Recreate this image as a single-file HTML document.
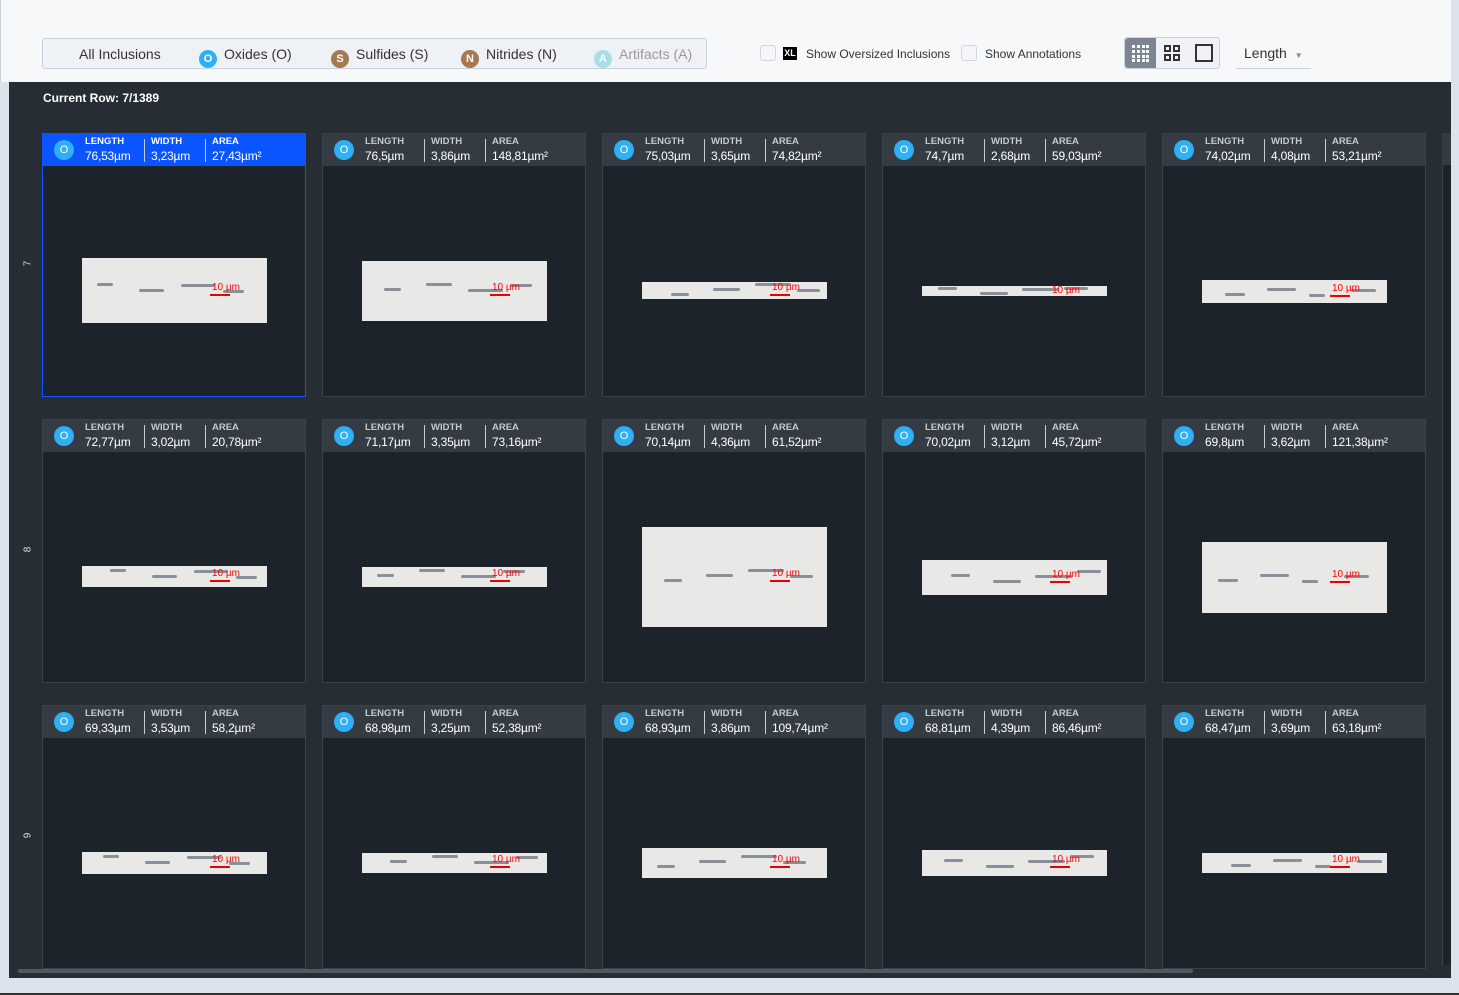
<!DOCTYPE html>
<html><head><meta charset="utf-8"><style>
*{box-sizing:border-box;margin:0;padding:0}
body{width:1459px;height:995px;background:#dce3ec;font-family:"Liberation Sans",sans-serif;position:relative;overflow:hidden}
.top{position:absolute;left:0;top:0;width:1451px;height:82px;background:#f6f8fa;border-left:1px solid #c8d0da}
.seg{position:absolute;left:41px;top:38px;width:665px;height:31px;border:1px solid #c9d1db;border-radius:3px;background:#eef2f6;font-size:14px;color:#333}
.seg span{position:absolute;top:7px;white-space:nowrap}
.dot{display:inline-block;width:18px;height:18px;border-radius:50%;color:#fff;font-size:11px;text-align:center;line-height:18px;font-weight:bold;margin-right:7px;vertical-align:-3px;font-style:normal}
.cb{position:absolute;top:45px;width:16px;height:16px;border:1px solid #cfd6de;border-radius:3px;background:#f3f5f8}
.lbl{position:absolute;top:47px;font-size:12px;color:#333}
.panel{position:absolute;left:9px;top:82px;width:1442px;height:896px;background:#262d35}
.card{position:absolute;width:264px;height:264px;background:#1d232a;border:1px solid #3a424b}
.hd{position:absolute;left:0;top:0;right:0;height:32px;background:#343b43}
.card.sel{border-color:#0a55ff}
.card.sel .hd{background:#0a55ff}
.hd .o{position:absolute;left:11px;top:6px;width:20px;height:20px;border-radius:50%;background:#2fb0f5;color:#fff;font-size:11px;text-align:center;line-height:20px}
.f{position:absolute;top:0;height:32px;color:#fff;padding-left:7px}
.f.l:before{content:"";position:absolute;left:0;top:5px;height:23px;width:1px;background:#c8ccd2}
.f b{display:block;font-size:9.5px;margin-top:2px;color:#c5cad2}
.card.sel .f b{color:#fff}
.f i{display:block;font-style:normal;font-size:12px;margin-top:2px;letter-spacing:-0.2px}
.img{position:absolute;left:39px;width:185px;background:#e8e8e6;overflow:hidden}
.s{position:absolute;height:3px;background:#8a8f99;border-radius:2px}
.sc{position:absolute;color:#f00;font-size:10px;line-height:10px}
.sc:after{content:"";position:absolute;left:-2px;top:11px;width:20px;height:2px;background:#e00}
.rl{position:absolute;left:25px;color:#ddd;font-size:10px;transform:rotate(-90deg)}
</style></head><body>
<div class="top">
<div class="seg">
<span style="left:36px">All Inclusions</span>
<span style="left:156px"><span class="dot" style="position:static;background:#2fb0f5">O</span>Oxides (O)</span>
<span style="left:288px"><span class="dot" style="position:static;background:#a57a52">S</span>Sulfides (S)</span>
<span style="left:418px"><span class="dot" style="position:static;background:#a57a52">N</span>Nitrides (N)</span>
<span style="left:551px;color:#999"><span class="dot" style="position:static;background:#a7dfe8">A</span>Artifacts (A)</span>
</div>
<div class="cb" style="left:759px"></div>
<div style="position:absolute;left:782px;top:47px;width:14px;height:13px;background:#000;color:#fff;font-size:9px;font-weight:bold;text-align:center;line-height:13px">XL</div>
<div class="lbl" style="left:805px">Show Oversized Inclusions</div>
<div class="cb" style="left:960px"></div>
<div class="lbl" style="left:984px">Show Annotations</div>
<div style="position:absolute;left:1123px;top:37px;width:96px;height:32px;border:1px solid #c9d1db;border-radius:3px;background:#eef2f6"></div>
<div style="position:absolute;left:1124px;top:38px;width:31px;height:30px;background:#7d8592;border-radius:3px 0 0 3px"></div>
<svg style="position:absolute;left:1131px;top:45px" width="17" height="17"><g fill="#fff"><rect x="0" y="0" width="3" height="3"/><rect x="5" y="0" width="3" height="3"/><rect x="10" y="0" width="3" height="3"/><rect x="14" y="0" width="3" height="3"/><rect x="0" y="5" width="3" height="3"/><rect x="5" y="5" width="3" height="3"/><rect x="10" y="5" width="3" height="3"/><rect x="14" y="5" width="3" height="3"/><rect x="0" y="10" width="3" height="3"/><rect x="5" y="10" width="3" height="3"/><rect x="10" y="10" width="3" height="3"/><rect x="14" y="10" width="3" height="3"/><rect x="0" y="14" width="3" height="3"/><rect x="5" y="14" width="3" height="3"/><rect x="10" y="14" width="3" height="3"/><rect x="14" y="14" width="3" height="3"/></g></svg>
<svg style="position:absolute;left:1163px;top:45px" width="16" height="16"><g fill="none" stroke="#333" stroke-width="2"><rect x="1" y="1" width="5" height="5"/><rect x="10" y="1" width="5" height="5"/><rect x="1" y="10" width="5" height="5"/><rect x="10" y="10" width="5" height="5"/></g></svg>
<svg style="position:absolute;left:1194px;top:44px" width="18" height="18"><rect x="1" y="1" width="16" height="16" fill="none" stroke="#333" stroke-width="2"/></svg>
<div style="position:absolute;left:1235px;top:38px;width:75px;height:31px;border-bottom:1px solid #c9d1db;font-size:14px;color:#333;padding:7px 0 0 8px">Length <span style="font-size:8px;color:#888;margin-left:4px">▼</span></div>
</div>
<div class="panel">
<div style="position:absolute;left:34px;top:9px;color:#fff;font-size:12px;font-weight:bold">Current Row: 7/1389</div>
<div style="position:absolute;left:1433px;top:51px;width:9px;height:832px;background:#1d232a;border-left:1px solid #3a424b"></div>
<div style="position:absolute;left:1433px;top:51px;width:9px;height:32px;background:#343b43"></div>
<div style="position:absolute;left:9px;top:887px;width:1175px;height:4px;background:#4f5964;border-radius:2px"></div>
</div>
<div class="rl" style="top:258px">7</div>
<div class="rl" style="top:544px">8</div>
<div class="rl" style="top:830px">9</div>
<div id="g"></div>
<script>
var d=[
[["76,53","3,23","27,43",257,65],["76,5","3,86","148,81",260,60],["75,03","3,65","74,82",281,17],["74,7","2,68","59,03",285,10],["74,02","4,08","53,21",279,23]],
[["72,77","3,02","20,78",565,21],["71,17","3,35","73,16",566,20],["70,14","4,36","61,52",526,100],["70,02","3,12","45,72",559,35],["69,8","3,62","121,38",541,71]],
[["69,33","3,53","58,2",851,22],["68,98","3,25","52,38",852,20],["68,93","3,86","109,74",847,30],["68,81","4,39","86,46",849,26],["68,47","3,69","63,18",852,20]]];
var h="";
for(var r=0;r<3;r++)for(var c=0;c<5;c++){var v=d[r][c];var x=42+c*280,y=133+r*286;
var iy=v[3]-y,ih=v[4];var sy=Math.max(0,ih/2-8);
var strokes="";for(var k=0;k<4;k++){strokes+='<div class="s" style="left:'+(15+k*42+(c*7+r*13)%20)+'px;top:'+Math.min(ih-4,Math.max(1,ih/2-3+((k*17+c*5)%11)-5))+'px;width:'+(16+(k*9+c)%22)+'px"></div>';}
h+='<div class="card'+(r==0&&c==0?' sel':'')+'" style="left:'+x+'px;top:'+y+'px"><div class="hd"><div class="o">O</div>'+
'<div class="f" style="left:35px"><b>LENGTH</b><i>'+v[0]+'µm</i></div>'+
'<div class="f l" style="left:101px"><b>WIDTH</b><i>'+v[1]+'µm</i></div>'+
'<div class="f l" style="left:162px"><b>AREA</b><i>'+v[2]+'µm²</i></div></div>'+
'<div class="img" style="top:'+iy+'px;height:'+ih+'px">'+strokes+'<div class="sc" style="left:130px;top:'+sy+'px">10 µm</div></div></div>';}
document.getElementById("g").innerHTML=h;
</script>
<div style="position:absolute;left:0;top:993px;width:1459px;height:2px;background:#333"></div>
</body></html>
